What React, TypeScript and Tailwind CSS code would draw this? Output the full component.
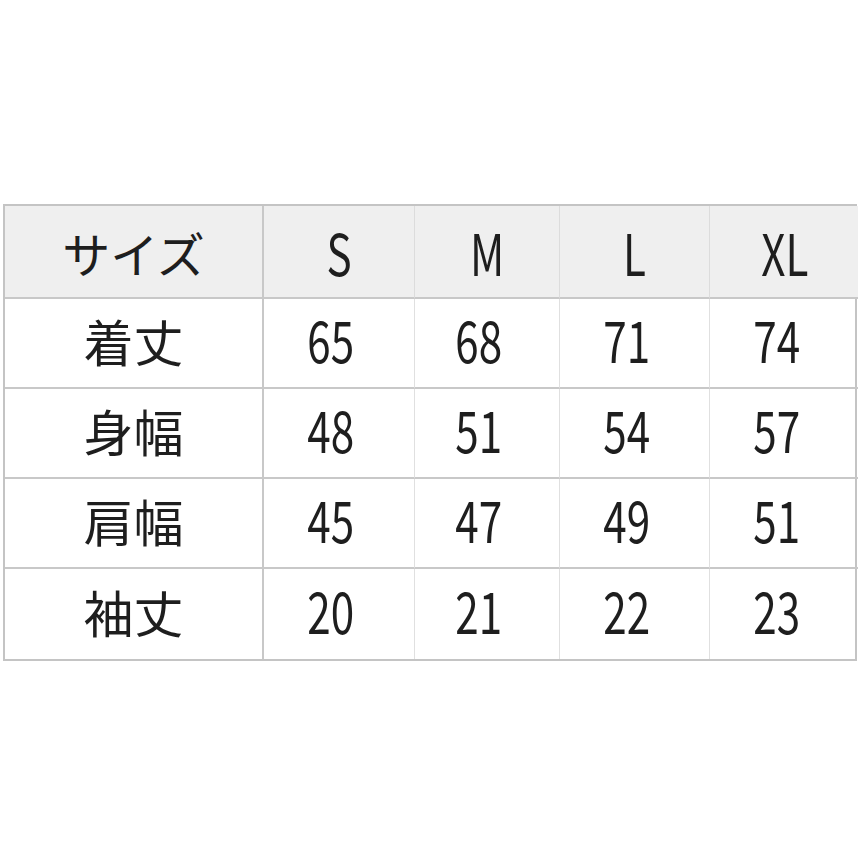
import React from "react";

const sizes = ["S", "M", "L", "XL"];

const rows: { label: string; values: string[] }[] = [
  { label: "着丈", values: ["65", "68", "71", "74"] },
  { label: "身幅", values: ["48", "51", "54", "57"] },
  { label: "肩幅", values: ["45", "47", "49", "51"] },
  { label: "袖丈", values: ["20", "21", "22", "23"] },
];

const jp = { fontFamily: '"Noto Sans CJK JP", "Noto Sans", sans-serif' };

const Num: React.FC<{ text: string }> = ({ text }) => (
  <span className="inline-block origin-center scale-x-[0.74] text-[57px] leading-none" style={jp}>
    {text}
  </span>
);

export default function App() {
  return (
    <div className="h-[858px] w-[858px] bg-white pl-[3px] pt-[204px] text-[#1e1e1e]">
      <div className="grid w-[854px] grid-cols-[259px_151px_145px_150px_149px] border-2 border-[#c4c4c4]">
        <div
          className="flex h-[93px] items-center justify-center border-r-2 border-b-2 border-[#c8c8c8] bg-[#efefef] text-[48px] leading-none"
          style={jp}
        >
          サイズ
        </div>
        {sizes.map((s, i) => (
          <div
            key={s}
            className={`flex h-[93px] items-center justify-center border-b-2 border-[#c8c8c8] bg-[#efefef] ${
              i < 3 ? "border-r border-r-[#dcdcdc]" : ""
            }`}
          >
            <Num text={s} />
          </div>
        ))}
        {rows.map((r, ri) => (
          <React.Fragment key={r.label}>
            <div
              className={`flex h-[90px] items-center justify-center border-r-2 border-[#c8c8c8] pb-[6px] text-[50px] leading-none ${
                ri < 3 ? "border-b-2" : ""
              }`}
              style={jp}
            >
              {r.label}
            </div>
            {r.values.map((v, i) => (
              <div
                key={i}
                className={`flex h-[90px] items-center justify-center pr-[16px] pb-[9px] border-[#c8c8c8] ${
                  ri < 3 ? "border-b-2" : ""
                } ${i < 3 ? "border-r border-r-[#e0e0e0]" : ""}`}
              >
                <Num text={v} />
              </div>
            ))}
          </React.Fragment>
        ))}
      </div>
    </div>
  );
}
